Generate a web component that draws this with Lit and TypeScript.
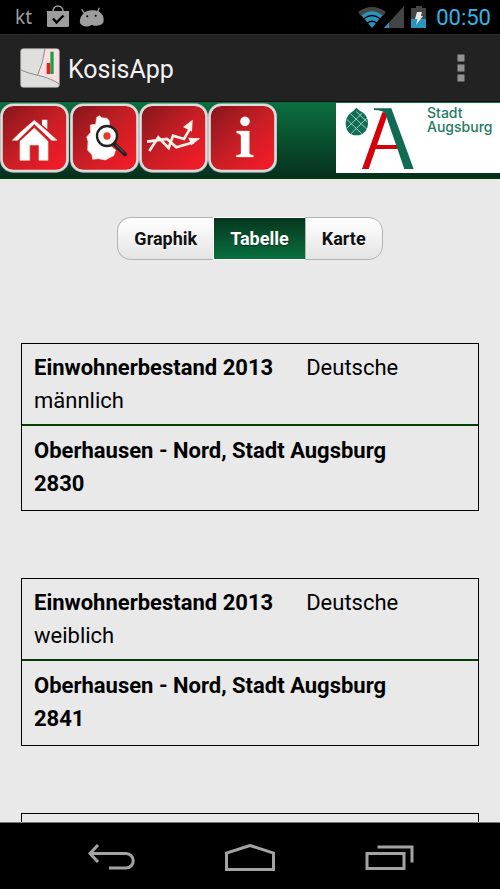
import { LitElement, html, css, svg } from "lit";
import { customElement, state } from "lit/decorators.js";

interface Entry {
  title: string;
  group: string;
  sex: string;
  area: string;
  count: string;
}

const entries: Entry[] = [
  { title: "Einwohnerbestand 2013", group: "Deutsche", sex: "männlich", area: "Oberhausen - Nord, Stadt Augsburg", count: "2830" },
  { title: "Einwohnerbestand 2013", group: "Deutsche", sex: "weiblich", area: "Oberhausen - Nord, Stadt Augsburg", count: "2841" },
  { title: "", group: "", sex: "", area: "", count: "" },
];

@customElement("status-bar")
class StatusBar extends LitElement {
  static styles = css`
    :host { display: flex; align-items: center; justify-content: space-between; height: 34px; padding: 0 9px 0 15px; background: #000; color: #9d9d9d; flex: none; }
    .left, .right { display: flex; align-items: center; }
    .left { gap: 10px; }
    .carrier { font: 19px/34px "Noto Sans", sans-serif; margin-right: 5px; }
    .time { font: 22px/34px Roboto, sans-serif; color: #33b5e5; padding-top: 2px; }
    svg { display: block; }
    .signals { margin-right: 9px; }
  `;
  render() {
    return html`
      <div class="left">
        <span class="carrier">kt</span>
        <svg width="22" height="24" viewBox="0 0 22 24" aria-hidden="true">
          <path d="M6 7V6a5 5 0 0 1 10 0v1" fill="none" stroke="#9d9d9d" stroke-width="1.4" />
          <path d="M0 6h22v14.500a1.500 1.500 0 0 1-1.500 1.500h-19a1.500 1.500 0 0 1-1.500-1.500z" fill="#9d9d9d" />
          <path d="M6 13.500l3.500 4 7-7" fill="none" stroke="#000" stroke-width="2.400" />
        </svg>
        <svg width="26" height="20" viewBox="0 0 78 60" aria-hidden="true">
          <path d="M9 8l8 13M60 4l-5 14" stroke="#9d9d9d" stroke-width="4" stroke-linecap="round" />
          <path d="M10 23C18 13 28 10 38 10c12-1 22 1 28 9 7 6 8 14 8 20 0 12-8 16-22 17-8 1-11-3-16-2-5 5-16 6-22 3C5 54 1 48 3 40c1-7 3-12 7-17z" fill="#9d9d9d" />
          <circle cx="25" cy="28" r="3" fill="#000" /><circle cx="50" cy="26" r="3" fill="#000" />
        </svg>
      </div>
      <div class="right">
        <svg class="signals" width="69" height="24" viewBox="0 0 69 24" aria-hidden="true">
          <path d="M0 7Q14 -3 28 7L25 11Q14 3 3 11z" fill="#444" />
          <path d="M3.500 10.500Q14 2 24.500 10.500L14 23z" fill="#2a94bd" />
          <path d="M5.500 14Q14 7 22.500 14M9 18.500Q14 14 19 18.500" fill="none" stroke="#000" stroke-width="1.300" />
          <path d="M46 1v22H26z" fill="#444" />
          <path d="M31 17.500V23H26z" fill="#2a94bd" />
          <path d="M53 3h5V1h6v2h4v20H53z" fill="#444" />
          <path d="M53 14h15v9H53z" fill="#2a94bd" />
          <path d="M59 7h5l-1 4h2l-7 9 1.500-6H57z" fill="#e8e8e8" />
        </svg>
        <span class="time">00:50</span>
      </div>
    `;
  }
}

@customElement("title-bar")
class TitleBar extends LitElement {
  static styles = css`
    :host { display: flex; align-items: center; height: 67px; padding: 0 24px 0 20px; background: #222; border-top: 1px solid #2d2d2d; box-sizing: border-box; flex: none; }
    h1 { margin: 0 0 0 8px; padding-top: 4px; flex: 1; font: 25px/32px Roboto, sans-serif; color: #f3f3f3; }
    svg { display: block; }
    button { border: 0; padding: 8px; background: none; }
  `;
  render() {
    return html`
      <svg width="40" height="40" viewBox="0 0 120 120" aria-hidden="true">
        <rect x="2" y="2" width="116" height="116" rx="8" fill="#dfdfdd" />
        <path d="M75 3h36q6 0 6 6v97L88 94 53 82Q69 46 75 3z" fill="#fbe0e1" />
        <path d="M75 3Q69 46 53 81M3 66q25 11 50 16 40 8 64 26" fill="none" stroke="#777" stroke-width="2.500" />
        <path d="M80 45h11v33H80z" fill="#ed1c24" />
        <path d="M91 11h10v67H91z" fill="#16a34a" />
        <rect x="2" y="2" width="116" height="116" rx="8" fill="none" stroke="#aaa" stroke-width="2" />
      </svg>
      <h1>KosisApp</h1>
      <button aria-label="Menü">
        <svg width="14" height="30" viewBox="0 0 14 30" fill="#929292"><path d="M3.500 1.500h7v7h-7zM3.500 11.500h7v7h-7zM3.500 21.500h7v7h-7z" /></svg>
      </button>
    `;
  }
}

const houseIcon = svg`
  <path d="M59 90L103 52 146 89l25 23h-16l-52-49-50 49H37z" fill="#fff" stroke="#ffe0cf" stroke-width="2"/>
  <path d="M126 50h16v29l-16-14z" fill="#fff"/>
  <path d="M60 115l43-40 41 40v57h-27v-46H89v46H60z" fill="#fff" stroke="#ffd9c8" stroke-width="2"/>`;

const mapIcon = svg`
  <path d="M80 43l9-5 6 6 16 2 7 8 1 35 3 40 15 12-6 17-14 7-10 6-22-4-17 2-2-14-13-13 1-27-4-13 12-14-1-22 16-2z" fill="#fff" stroke="#ffdccb" stroke-width="2"/>
  <circle cx="111" cy="99" r="30" fill="#fff" stroke="#222" stroke-width="7"/>
  <circle cx="111" cy="99" r="11" fill="#e33a2b"/>
  <path d="M133 123l32 31" stroke="#222" stroke-width="12" stroke-linecap="round"/>
  <path d="M138 125l24 24" stroke="#888" stroke-width="2"/>`;

const chartIcon = svg`
  <g fill="none" stroke="#fff3ea" stroke-width="8" stroke-linejoin="miter">
    <path d="M31 144l27-41 31 32 13-37 33 10 18-31"/>
    <path d="M24 116l60-8 28 25 52-15"/>
  </g>
  <path d="M161 50l-29 22 27 14zM184 106l-36-2 9 23z" fill="#fff3ea"/>`;

const infoIcon = svg`
  <g fill="#fff" stroke="#ffe3d5" stroke-width="1">
    <circle cx="111" cy="55" r="14"/>
    <path d="M86 84h38v66q0 6 12 7v5H85v-5q14-1 14-7v-50q0-8-13-10z"/>
  </g>`;

@customElement("tool-bar")
class ToolBar extends LitElement {
  static styles = css`
    :host { display: flex; justify-content: space-between; align-items: flex-start; box-sizing: border-box; height: 78px; padding: 1px 0 0; background: linear-gradient(#0c7040, #05301c 76px); border-bottom: 1px solid #053f05; border-top: 1px solid #111; flex: none; }
    nav { display: flex; }
    button { border: 0; padding: 0; background: none; }
    svg { display: block; }
    nav button + button { padding-left: 1px; margin-right: -1px; }
    .logo { display: flex; width: 164px; height: 70px; background: #fff; text-decoration: none; }
    .name { display: flex; flex-direction: column; margin-left: 11px; padding-top: 3px; font: 500 14px/14px Inter, sans-serif; color: #247a62; }
  `;
  tile(label: string, icon: unknown) {
    return html`<button aria-label=${label}>
      <svg width="69" height="70" viewBox="0 0 207 210">
        <defs>
          <linearGradient id="red" x1="0" y1="0" x2="1" y2="1">
            <stop offset="0" stop-color="#82161b" />
            <stop offset="0.500" stop-color="#c81e25" />
            <stop offset="0.850" stop-color="#ed1c27" />
          </linearGradient>
        </defs>
        <rect x="4" y="5" width="199" height="200" rx="35" fill="url(#red)" stroke="#b4b5b5" stroke-width="8" />
        <rect x="5" y="6" width="197" height="197" rx="34" fill="none" stroke="#dedede" stroke-width="6" />
        ${icon}
      </svg>
    </button>`;
  }
  render() {
    return html`
      <nav>
        ${this.tile("Startseite", houseIcon)} ${this.tile("Gebiet suchen", mapIcon)}
        ${this.tile("Zeitreihen", chartIcon)} ${this.tile("Information", infoIcon)}
      </nav>
      <a class="logo" href="#">
        <svg width="80" height="70" viewBox="33 12 240 210" aria-hidden="true">
          <path d="M94 26q10 10 19 14 17 14 16 36-2 25-26 33H86Q65 103 62 78q-1-24 15-37 9-5 17-15z" fill="#0f6e55" />
          <path d="M76 44l50 47M66 62l44 42M94 38l33 31M112 42L64 89M127 56L78 104" stroke="#a5cbbd" stroke-width="3" />
          <path d="M172 40h18L131 210h-20zM148 138h70v12h-74z" fill="#d4000c" />
          <path d="M147 28h52l67 182h-28L181 44q-7-11-34-11z" fill="#0f6b53" />
        </svg>
        <span class="name"><span>Stadt</span><span>Augsburg</span></span>
      </a>
    `;
  }
}

@customElement("view-switch")
class ViewSwitch extends LitElement {
  @state() private active = "Tabelle";
  static styles = css`
    :host { display: flex; justify-content: center; }
    button { height: 43px; padding: 0 16px; border: 1px solid #b3b3b3; background: linear-gradient(#fff, #e4e4e4); font: bold 18px/24px Roboto, sans-serif; color: #111; text-shadow: 0 1px 0 #fff; }
    button:first-child { border-radius: 14px 0 0 14px; border-right: 0; }
    button:last-child { border-radius: 0 14px 14px 0; }
    button.on { background: linear-gradient(#06361e, #08703d); border: 1px solid #fff; border-right: 0; color: #fff; text-shadow: 0 1px 1px #032; }
  `;
  render() {
    return ["Graphik", "Tabelle", "Karte"].map(
      (name) => html`<button class=${name === this.active ? "on" : ""} aria-pressed=${name === this.active} @click=${() => (this.active = name)}>${name}</button>`
    );
  }
}

@customElement("data-card")
class DataCard extends LitElement {
  static properties = { entry: { attribute: false } };
  declare entry: Entry;
  static styles = css`
    :host { display: block; }
    table { width: 100%; border-spacing: 0; border: 1px solid #000; font: 22px/33px Roboto, sans-serif; color: #000; }
    th, td { text-align: left; padding: 7px 12px; }
    th { font-weight: normal; border-bottom: 2px solid #053f05; }
    td { padding: 8px 12px 10px; font-weight: bold; }
    b { margin-right: 33px; }
    .line { display: block; min-height: 33px; }
  `;
  render() {
    const e = this.entry;
    return html`<table>
      <thead><tr><th scope="col"><span class="line"><b>${e.title}</b>${e.group}</span><span class="line">${e.sex}</span></th></tr></thead>
      <tbody><tr><td><span class="line">${e.area}</span><span class="line">${e.count}</span></td></tr></tbody>
    </table>`;
  }
}

@customElement("nav-bar")
class NavBar extends LitElement {
  static styles = css`
    :host { display: grid; grid-template-columns: repeat(3, 1fr); height: 67px; padding: 0 41px; background: #000; border-top: 1px solid #777; box-sizing: border-box; flex: none; }
    button { display: flex; align-items: center; justify-content: center; border: 0; padding: 3px 0 0; background: none; }
    svg { display: block; fill: none; stroke: #a3a3a3; stroke-width: 3; }
  `;
  render() {
    return html`
      <button aria-label="Zurück"><svg width="48" height="28" viewBox="0 0 48 28"><path d="M11 1L3 9.500 11 18M3 9.500h36a7.250 7.250 0 0 1 0 14.500H22" /></svg></button>
      <button aria-label="Home"><svg width="52" height="28" viewBox="0 0 52 28"><path d="M2.500 25.500V9L26 1.500 49.500 9v16.500z" /></svg></button>
      <button aria-label="Letzte Apps"><svg width="50" height="28" viewBox="0 0 50 28"><path d="M3 9.500h37v15H3zM13.500 3H48v15.500" /></svg></button>
    `;
  }
}

@customElement("app-root")
class AppRoot extends LitElement {
  static styles = css`
    :host { display: flex; flex-direction: column; height: 100vh; background: #e9e9e9; }
    main { flex: 1; min-height: 0; overflow-y: auto; scrollbar-width: none; padding: 38px 21px 0; }
    .list { display: grid; gap: 67px; padding: 83px 0 67px; }
  `;
  render() {
    return html`
      <status-bar></status-bar>
      <title-bar></title-bar>
      <tool-bar></tool-bar>
      <main>
        <view-switch></view-switch>
        <div class="list">${entries.map((e) => html`<data-card .entry=${e}></data-card>`)}</div>
      </main>
      <nav-bar></nav-bar>
    `;
  }
}
